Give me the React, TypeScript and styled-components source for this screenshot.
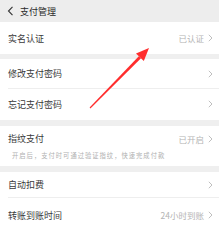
import React from "react";
import styled, { createGlobalStyle } from "styled-components";

const GlobalStyle = createGlobalStyle`
  html, body {
    margin: 0;
    padding: 0;
    background: #efefef;
  }
  body {
    font-family: "Noto Sans CJK SC", "Noto Sans", sans-serif;
  }
`;

const Page = styled.div`
  position: relative;
  width: 219px;
  height: 230px;
  overflow: hidden;
  background: #efefef;
`;

const Header = styled.div`
  height: 22px;
  display: flex;
  align-items: center;
  padding-left: 7px;
  gap: 6px;
  background: #ededed;
  font-size: 9px;
  color: #2a2a2a;
`;

const Group = styled.div<{ $gap: number }>`
  margin-top: ${(p) => p.$gap}px;
  background: #fff;
`;

const Row = styled.div<{ $h: number; $divider?: boolean }>`
  height: ${(p) => p.$h}px;
  display: flex;
  flex-direction: column;
  justify-content: center;
  padding: 0 6px 0 8px;
  position: relative;

  &::before {
    content: "";
    display: ${(p) => (p.$divider ? "block" : "none")};
    position: absolute;
    top: 0;
    left: 8px;
    right: 0;
    height: 1px;
    background: #eeeeee;
  }
`;

const Line = styled.div`
  display: flex;
  align-items: center;
  justify-content: space-between;
`;

const Title = styled.span`
  font-size: 9px;
  color: #3a3a3a;
`;

const Extra = styled.span`
  display: flex;
  align-items: center;
  gap: 4px;
  font-size: 8.5px;
  color: #b4b4b4;
`;

const Sub = styled.div`
  margin-top: 6px;
  padding-left: 4px;
  font-size: 6.3px;
  letter-spacing: 1px;
  color: #b0b0b0;
`;

const Arrow = styled.svg`
  position: absolute;
  left: 0;
  top: 0;
  pointer-events: none;
`;

const Chevron = () => (
  <svg width="5" height="8" viewBox="0 0 5 8">
    <polyline points="0.8,0.8 4,4 0.8,7.2" fill="none" stroke="#b8b8b8" strokeWidth="0.9" />
  </svg>
);

const Back = () => (
  <svg width="7" height="10" viewBox="0 0 7 10">
    <polyline points="5.5,0.8 1.5,5 5.5,9.2" fill="none" stroke="#333" strokeWidth="1.1" />
  </svg>
);

const Item = ({ title, extra, h, divider, sub }: { title: string; extra?: string; h: number; divider?: boolean; sub?: string }) => (
  <Row $h={h} $divider={divider}>
    <Line>
      <Title>{title}</Title>
      <Extra>
        {extra}
        <Chevron />
      </Extra>
    </Line>
    {sub && <Sub>{sub}</Sub>}
  </Row>
);

export default function App() {
  return (
    <Page>
      <GlobalStyle />
      <Header>
        <Back />
        支付管理
      </Header>
      <Group $gap={0}>
        <Item title="实名认证" extra="已认证" h={32} />
      </Group>
      <Group $gap={5}>
        <Item title="修改支付密码" h={29} />
        <Item title="忘记支付密码" h={32} divider />
      </Group>
      <Group $gap={6}>
        <Item title="指纹支付" extra="已开启" h={40} sub="开启后，支付时可通过验证指纹，快速完成付款" />
      </Group>
      <Group $gap={6}>
        <Item title="自动扣费" h={25} />
        <Item title="转账到账时间" extra="24小时到账" h={36} divider />
      </Group>
      <Arrow width="219" height="230" viewBox="0 0 219 230">
        <polygon points="90.4,108.4 89.6,107.6 138.8,56.2 141,58.3" fill="#ff2d2d" />
        <polygon points="149,48 136,53.4 143.8,61.1" fill="#ff2d2d" />
      </Arrow>
    </Page>
  );
}
